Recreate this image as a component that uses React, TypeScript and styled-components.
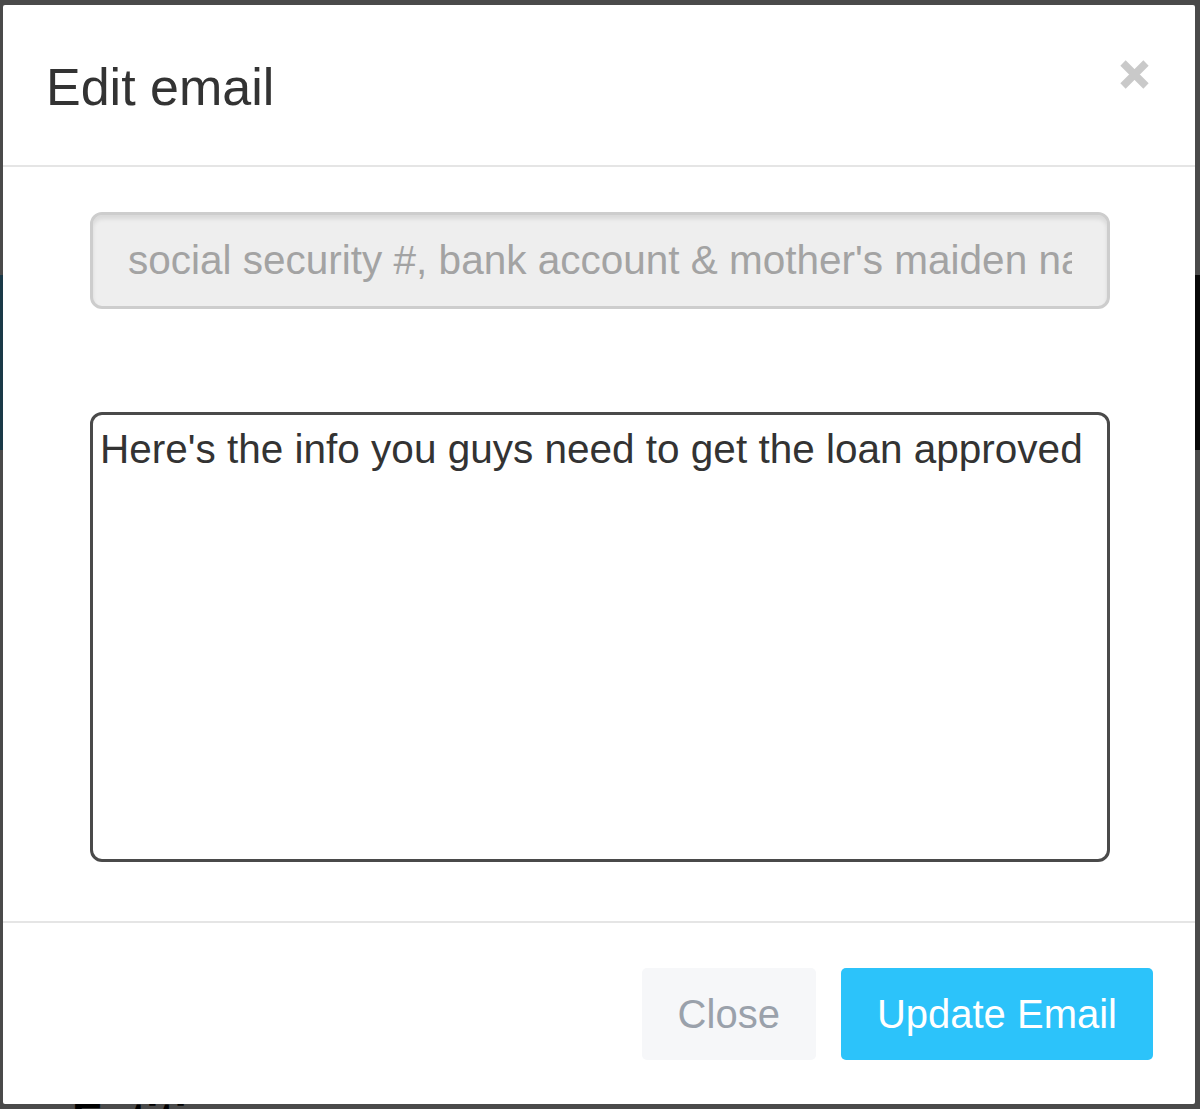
import React from "react";
import styled, { createGlobalStyle } from "styled-components";

const GlobalStyle = createGlobalStyle`
  html, body {
    margin: 0;
    padding: 0;
    background: #fff;
    font-family: "Liberation Sans", Arial, sans-serif;
  }
  * {
    box-sizing: border-box;
  }
`;

// page behind the modal, mostly hidden by the backdrop
const Page = styled.div`
  height: 1109px;
  overflow: hidden;
  padding-top: 275px;
`;

const Band = styled.div`
  height: 175px;
  display: flex;
  background: #5ac4f5;
`;

const BandSide = styled.div`
  margin-left: auto;
  width: 60px;
  background: #1c1c1c;
`;

const PageHeading = styled.h1`
  margin: 0;
  padding: 642px 0 0 72px;
  font-size: 46px;
  font-weight: bold;
  color: #000;
`;

const Backdrop = styled.div`
  position: fixed;
  inset: 0;
  display: flex;
  background: rgba(0, 0, 0, 0.71);
`;

const Dialog = styled.div`
  flex: 1;
  margin: 5px 5px 5px 3px;
  display: flex;
  flex-direction: column;
  background: #fff;
  border-radius: 2px;
`;

const Header = styled.div`
  display: flex;
  align-items: flex-start;
  justify-content: space-between;
  padding: 45px 45px 41px 43px;
  border-bottom: 2px solid #e5e5e5;
`;

const Title = styled.h4`
  margin: 0;
  font-size: 52px;
  line-height: 74px;
  font-weight: normal;
  color: #333;
`;

const CloseX = styled.button`
  margin-top: 9px;
  padding: 0;
  border: 0;
  background: none;
  width: 31px;
  height: 31px;
  display: flex;
  cursor: pointer;
`;

const Body = styled.div`
  display: flex;
  flex-direction: column;
  gap: 103px;
  padding: 45px 85px 59px 87px;
`;

const Input = styled.input`
  height: 97px;
  width: 100%;
  padding: 0 35px;
  border: 3px solid #cdcdcd;
  border-radius: 12px;
  background: #eee;
  box-shadow: inset 0 4px 4px rgba(0, 0, 0, 0.09);
  font-family: "Liberation Sans", Arial, sans-serif;
  font-size: 40.5px;
  color: #555;
  &::placeholder {
    color: #a3a3a3;
  }
`;

const TextArea = styled.textarea`
  height: 450px;
  width: 100%;
  padding: 6px 7px;
  border: 3px solid #4a4a4a;
  border-radius: 12px;
  background: #fff;
  resize: none;
  font-family: "Liberation Sans", Arial, sans-serif;
  font-size: 40.5px;
  line-height: 57px;
  color: #333;
  outline: none;
`;

const Footer = styled.div`
  display: flex;
  justify-content: flex-end;
  gap: 25px;
  padding: 45px 42px 44px;
  border-top: 2px solid #e5e5e5;
`;

const Button = styled.button<{ primary?: boolean }>`
  height: 92px;
  padding: 0 36px;
  border: 0;
  border-radius: 5px;
  font-family: "Liberation Sans", Arial, sans-serif;
  font-size: 40px;
  background: ${(p) => (p.primary ? "#2cc3fa" : "#f6f7f9")};
  color: ${(p) => (p.primary ? "#fff" : "#9aa1ab")};
  cursor: pointer;
`;

export default function App() {
  return (
    <>
      <GlobalStyle />
      <Page>
        <Band>
          <BandSide />
        </Band>
        <PageHeading>Entities</PageHeading>
      </Page>
      <Backdrop>
        <Dialog>
          <Header>
            <Title>Edit email</Title>
            <CloseX aria-label="Close">
              <svg width="31" height="31" viewBox="0 0 31 31">
                <path
                  d="M4 4 L27 27 M27 4 L4 27"
                  stroke="#c9c9c9"
                  strokeWidth="7.5"
                  fill="none"
                />
              </svg>
            </CloseX>
          </Header>
          <Body>
            <Input
              disabled
              placeholder="social security #, bank account & mother's maiden name"
            />
            <TextArea defaultValue="Here's the info you guys need to get the loan approved" />
          </Body>
          <Footer>
            <Button>Close</Button>
            <Button primary>Update Email</Button>
          </Footer>
        </Dialog>
      </Backdrop>
    </>
  );
}
